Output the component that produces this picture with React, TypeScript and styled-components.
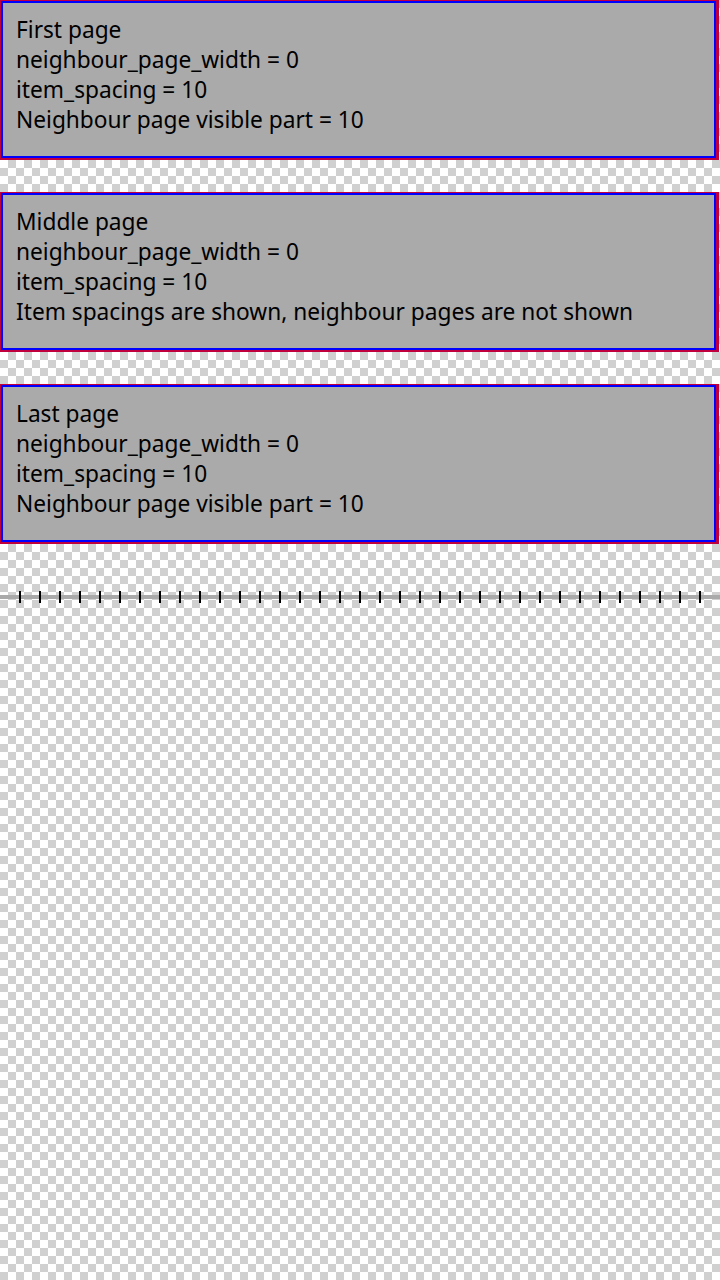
import { FC } from "react";
import styled, { createGlobalStyle } from "styled-components";

const GlobalStyle = createGlobalStyle`
    html, body {
        margin:0;
        padding:0;
    }
    body {
        width:720px;
        min-height:1280px;
        font-family:"Noto Sans", "DejaVu Sans", sans-serif;
        background-color:#ffffff;
        background-image:conic-gradient(#d0d0d0 25%, #ffffff 0 50%, #d0d0d0 0 75%, #ffffff 0);
        background-size:16px 16px;
    }
`

type Page = {
    title: string;
    note: string;
};

const pages: Page[] = [
    { title: "First page", note: "Neighbour page visible part = 10" },
    { title: "Middle page", note: "Item spacings are shown, neighbour pages are not shown" },
    { title: "Last page", note: "Neighbour page visible part = 10" },
];

const ticks = Array.from({ length: 35 }, (_, i) => i);

const PageCard: FC<{ page: Page }> = ({ page }) => (
    <SOuter>
        <SInner>
            <SLine>{page.title}</SLine>
            <SLine>neighbour_page_width = 0</SLine>
            <SLine>item_spacing = 10</SLine>
            <SLine>{page.note}</SLine>
        </SInner>
    </SOuter>
);

const App: FC = () => (
    <>
        <GlobalStyle />
        <SPage>
            <SList>
                {pages.map((p) => (
                    <PageCard key={p.title} page={p} />
                ))}
            </SList>
            <SIndicator>
                {ticks.map((i) => (
                    <STick key={i} />
                ))}
            </SIndicator>
        </SPage>
    </>
);

export default App;

const SPage = styled.div`
    display:flex;
    flex-direction:column;
    width:720px;
`

const SList = styled.div`
    display:flex;
    flex-direction:column;
    gap:32px;
`

const SOuter = styled.div`
    box-sizing:border-box;
    width:719px;
    height:160px;
    background:#c0003c;
    padding:1px 3px 2px 1px;
`

const SInner = styled.div`
    box-sizing:border-box;
    height:100%;
    border:2px solid #0000ff;
    background:#aaaaaa;
    padding:12px 13px 8px;
    display:flex;
    flex-direction:column;
`

const SLine = styled.div`
    font-size:22.7px;
    line-height:30px;
    color:#000000;
    white-space:nowrap;
`

const SIndicator = styled.div`
    margin-top:47px;
    height:12px;
    display:flex;
    align-items:center;
    gap:18px;
    padding-left:19px;
    background:linear-gradient(#aaaaaa, #aaaaaa) 0 4px / 100% 4px no-repeat;
`

const STick = styled.div`
    width:2px;
    height:12px;
    background:#000000;
    flex:none;
`
